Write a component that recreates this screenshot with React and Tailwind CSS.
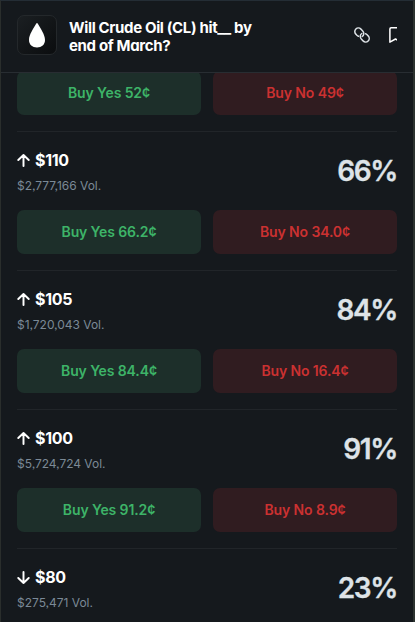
import React from 'react';

const markets = [
    { id: 'up-110', dir: 'up', price: '$110', volume: '$2,777,166', chance: '66%', yes: '66.2¢', no: '34.0¢' },
    { id: 'up-105', dir: 'up', price: '$105', volume: '$1,720,043', chance: '84%', yes: '84.4¢', no: '16.4¢' },
    { id: 'up-100', dir: 'up', price: '$100', volume: '$5,724,724', chance: '91%', yes: '91.2¢', no: '8.9¢' },
    { id: 'down-80', dir: 'down', price: '$80', volume: '$275,471', chance: '23%' },
];

const DropIcon = () => (
    <svg width="16" height="25" viewBox="0 0 16 25" fill="#fff">
        <path d="M8 0C8.3 0 8.5.2 8.7.6 11.3 5.2 16 11.7 16 17c0 4.600-3.400 7.500-8 7.500S0 21.600 0 17C0 11.700 4.700 5.200 7.300.6 7.500.2 7.700 0 8 0Z" />
    </svg>
);

const LinkIcon = () => (
    <svg className="shrink-0" width="16" height="16" viewBox="0 0 16 16" fill="none" stroke="#dee3e7" strokeWidth="1.500" strokeLinecap="round" strokeLinejoin="round">
        <path d="M4.500 9.200A3.600 3.600 0 0 1 2.900 8.300L1.800 7.100A3.500 3.500 0 0 1 6.900 2.100L8.900 4.300A3.500 3.500 0 0 1 8.200 9.500" />
        <path d="M11.500 6.800A3.600 3.600 0 0 1 13.100 7.700L14.200 8.900A3.500 3.500 0 0 1 9.100 13.900L7.100 11.700A3.500 3.500 0 0 1 7.800 6.500" />
    </svg>
);

/* Bookmark runs past the edge of the action group */
const BookmarkIcon = () => (
    <svg className="shrink-0" width="13" height="16" viewBox="0 0 13 16" fill="none" stroke="#fff" strokeWidth="1.500" strokeLinejoin="round">
        <path d="M.9 2C.9 1.200 1.400.8 2.100.8H10.900C11.600.8 12.100 1.200 12.100 2V15.100L6.500 12 .9 15.100Z" />
    </svg>
);

const Arrow = ({ dir }) => (
    <svg
        className={dir === 'down' ? 'rotate-180' : ''}
        width="13" height="13" viewBox="0 0 12 12" fill="none" stroke="#fff" strokeWidth="1.800" strokeLinecap="round" strokeLinejoin="round"
    >
        <path d="M6 11.100V1M1.200 5.500 6 1l4.800 4.500" />
    </svg>
);

const BuyButtons = ({ yes, no }) => (
    <div className="grid grid-cols-2 gap-3 text-[14px] font-semibold tracking-[-0.12px]">
        <button className="h-11 rounded-[7px] bg-[#1d2f2a] pb-[2px] text-[#3db468]">Buy Yes {yes}</button>
        <button className="h-11 rounded-[7px] bg-[#301c20] pb-[2px] text-[#cb3131]">Buy No {no}</button>
    </div>
);

const MarketRow = ({ market }) => (
    <div className="h-[139px] border-t border-[#212529] pt-[17px]">
        <div className="flex h-[61px] justify-between">
            <div>
                <div className="flex h-[22px] items-center gap-[5px] text-[16px] font-bold tracking-[-0.3px] text-white">
                    <Arrow dir={market.dir} />
                    {market.price}
                </div>
                <div className="mt-[6px] text-[12px] leading-[18px] tracking-[-0.02px] text-[#7b8996]">{market.volume} Vol.</div>
            </div>
            <div className="pt-[2px] text-[28px] font-semibold leading-10 tracking-[-1.4px] text-[#dee3e7] [-webkit-text-stroke:0.3px_#dee3e7]">
                {market.chance}
            </div>
        </div>
        {market.yes && <BuyButtons yes={market.yes} no={market.no} />}
    </div>
);

const App = () => {
    return (
        <div className="flex h-[622px] w-[415px] flex-col overflow-hidden border-l border-r-2 border-t border-l-[#2a2e2c] border-r-[#2c322f] border-t-[#242d35] bg-[#15191d] font-['Inter',sans-serif] [font-feature-settings:'cv11','ss03']">
            <header className="flex h-[72px] shrink-0 items-center border-b border-[#282d32] pb-[3px] pl-4 pr-4">
                <div className="flex size-10 shrink-0 items-center justify-center rounded-[7px] border border-[#24282b] bg-linear-to-br from-[#1b1f22] to-[#0b0d0f]">
                    <DropIcon />
                </div>
                <h1 className="ml-3 mt-1 w-[195px] text-[15px] font-bold leading-[18px] tracking-[-0.35px] text-white">
                    Will Crude Oil (CL) hit__ by end of March?
                </h1>
                <div className="ml-auto flex w-[43px] items-center gap-[19px] overflow-hidden">
                    <LinkIcon />
                    <BookmarkIcon />
                </div>
            </header>

            <main className="min-h-0 flex-1 overflow-hidden px-4">
                <div className="-mt-[2px] mb-4">
                    <BuyButtons yes="52¢" no="49¢" />
                </div>
                {markets.map((market) => (
                    <MarketRow key={market.id} market={market} />
                ))}
            </main>
        </div>
    );
};

export default App;
